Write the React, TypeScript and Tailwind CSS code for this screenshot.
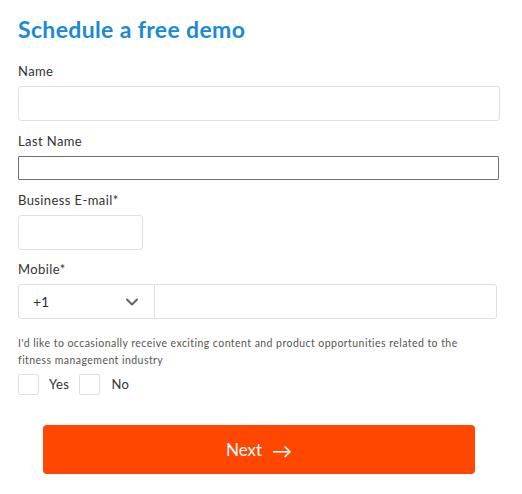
import { ChevronDown } from "lucide-react";

export default function App() {
  return (
    <div className="w-[522px] h-[494px] bg-white font-['Lato',sans-serif] text-[#333]">
      <form className="pl-[18px] pr-[22px] pt-[14px] flex flex-col">
        <h1 className="text-[23px] leading-[30px] font-bold text-[#1a8ad4] tracking-[0.35px]">
          Schedule a free demo
        </h1>

        <label className="mt-[18px] text-[13px] leading-[18px] tracking-[0.4px] text-[#333]">Name</label>
        <input
          type="text"
          className="mt-[6px] h-[35px] w-full rounded-[3px] border border-[#dde1e4] bg-white outline-none"
        />

        <label className="mt-[11px] text-[13px] leading-[18px] tracking-[0.4px] text-[#333]">Last Name</label>
        <input
          type="text"
          className="mt-[6px] h-[24px] w-[481px] rounded-[1px] border border-[#707070] bg-white outline-none"
        />

        <label className="mt-[11px] text-[13px] leading-[18px] tracking-[0.4px] text-[#333]">Business E-mail*</label>
        <input
          type="email"
          className="mt-[6px] h-[35px] w-[125px] rounded-[3px] border border-[#dde1e4] bg-white outline-none"
        />

        <label className="mt-[10px] text-[13px] leading-[18px] tracking-[0.4px] text-[#333]">Mobile*</label>
        <div className="mt-[6px] flex h-[35px] w-[479px] rounded-[3px] border border-[#dde1e4]">
          <div className="flex w-[136px] items-center justify-between border-r border-[#dde1e4] pl-[14px] pr-[12px]">
            <span className="text-[14px] text-[#333]">+1</span>
            <ChevronDown size={20} strokeWidth={2.5} className="text-[#666]" />
          </div>
          <input type="tel" className="flex-1 bg-transparent outline-none" />
        </div>

        <p className="mt-[16px] w-[455px] text-[10.5px] leading-[17px] tracking-[0.45px] text-[#555]">
          I'd like to occasionally receive exciting content and product opportunities related to the fitness management industry
        </p>

        <div className="mt-[5px] flex items-center">
          <span className="h-[21px] w-[21px] rounded-[2px] border border-[#dde1e4]" />
          <span className="ml-[10px] text-[13px] tracking-[0.4px] text-[#333]">Yes</span>
          <span className="ml-[10px] h-[21px] w-[21px] rounded-[2px] border border-[#dde1e4]" />
          <span className="ml-[11px] text-[13px] tracking-[0.4px] text-[#333]">No</span>
        </div>

        <button
          type="button"
          className="mx-[25px] mt-[30px] flex h-[49px] items-center justify-center gap-[10px] rounded-[4px] bg-[#ff4700] text-[17px] text-white"
        >
          <span>Next</span>
          <span className="text-[20px] leading-none">→</span>
        </button>
      </form>
    </div>
  );
}
